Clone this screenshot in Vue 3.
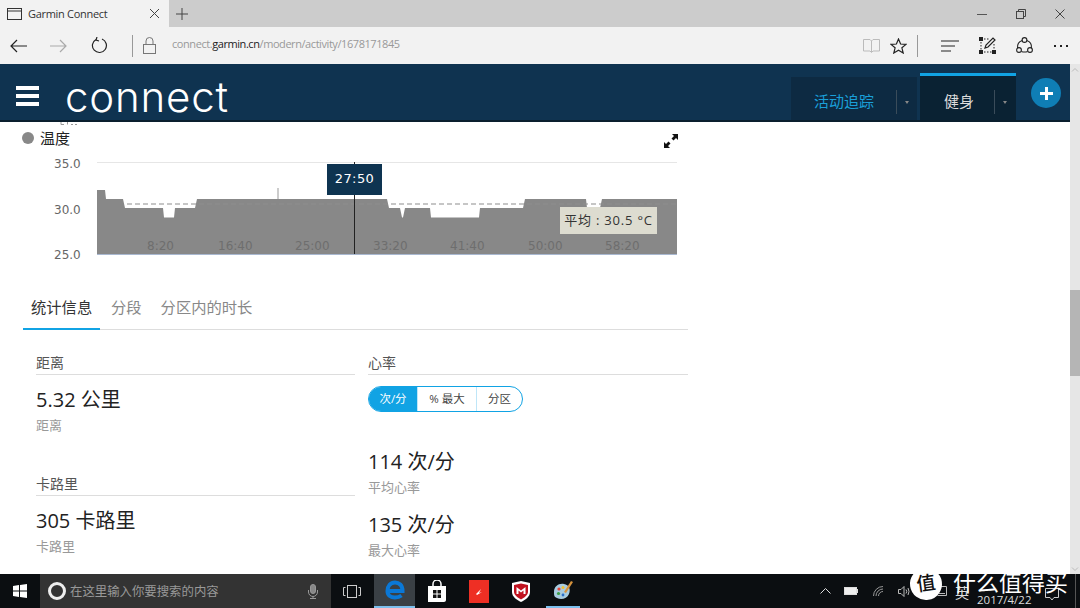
<template>
  <div class="screen">
    <!-- browser tab strip -->
    <div class="tabstrip">
      <div class="tab">
        <svg class="tab-icon" width="15" height="12" viewBox="0 0 15 12" fill="none" stroke="#333" stroke-width="1">
          <rect x="0.5" y="0.5" width="14" height="11" />
          <line x1="0.5" y1="3" x2="14.5" y2="3" />
        </svg>
        <span class="tab-title">Garmin Connect</span>
        <svg class="tab-close" width="9" height="9" viewBox="0 0 9 9" stroke="#444" stroke-width="1">
          <path d="M0 0 L9 9 M9 0 L0 9" />
        </svg>
      </div>
      <svg class="tab-new" width="12" height="12" viewBox="0 0 12 12" stroke="#444" stroke-width="1">
        <path d="M6 0 V12 M0 6 H12" />
      </svg>
      <div class="win-controls">
        <svg width="10" height="10" viewBox="0 0 10 10" stroke="#555"><path d="M0 5.5 H10" /></svg>
        <svg width="10" height="10" viewBox="0 0 10 10" stroke="#444" fill="none">
          <rect x="0.5" y="2.5" width="7" height="7" /><path d="M2.5 2.5 V0.5 H9.5 V7.5 H7.5" />
        </svg>
        <svg width="10" height="10" viewBox="0 0 10 10" stroke="#444"><path d="M0.5 0.5 L9.5 9.5 M9.5 0.5 L0.5 9.5" /></svg>
      </div>
    </div>

    <!-- address bar -->
    <div class="toolbar">
      <svg class="tb-back" width="17" height="14" viewBox="0 0 17 14" fill="none" stroke="#222" stroke-width="1.2">
        <path d="M17 7 H1 M7 1 L1 7 L7 13" />
      </svg>
      <svg class="tb-forward" width="17" height="14" viewBox="0 0 17 14" fill="none" stroke="#aaa" stroke-width="1.2">
        <path d="M0 7 H16 M10 1 L16 7 L10 13" />
      </svg>
      <svg class="tb-reload" width="17" height="17" viewBox="0 0 17 17" fill="none" stroke="#222" stroke-width="1.2">
        <path d="M5 2.4 A7 7 0 1 0 11 2 M6 0 L5 3 L8 4" />
      </svg>
      <div class="tb-sep"></div>
      <svg class="tb-lock" width="13" height="17" viewBox="0 0 13 17" fill="none" stroke="#777" stroke-width="1">
        <rect x="0.5" y="7.5" width="12" height="9" /><path d="M3 7.5 V4 A3.5 3.5 0 0 1 10 4 V7.5" />
      </svg>
      <div class="url">connect.<b>garmin.cn</b>/modern/activity/1678171845</div>
      <div class="tb-right">
        <svg width="17" height="15" viewBox="0 0 17 15" fill="none" stroke="#bbb" stroke-width="1">
          <path d="M0.5 1.5 H7 L8.5 3 L10 1.5 H16.5 V13 H10 L8.5 14.5 L7 13 H0.5 Z M8.5 3 V14" />
        </svg>
        <svg class="tb-star" width="17" height="16" viewBox="0 0 17 16" fill="none" stroke="#222" stroke-width="1.2">
          <path d="M8.5 1 L10.6 6 L16 6.4 L11.9 9.8 L13.2 15 L8.5 12.2 L3.8 15 L5.1 9.8 L1 6.4 L6.4 6 Z" />
        </svg>
        <div class="tb-sep sep-right"></div>
        <svg class="tb-hub" width="18" height="12" viewBox="0 0 18 12" stroke="#222" stroke-width="1.2">
          <path d="M0 1 H18 M0 6 H14 M0 11 H10" />
        </svg>
        <svg class="tb-note" width="17" height="17" viewBox="0 0 17 17" fill="none" stroke="#222" stroke-width="1">
          <path d="M2 2 H11 M2 15 H15 M2 2 V15 M15 7 V15" stroke-dasharray="1.5 1.5" />
          <rect x="0.5" y="0.5" width="3" height="3" fill="#222" />
          <rect x="0.5" y="13.5" width="3" height="3" fill="#222" />
          <rect x="13.5" y="13.5" width="3" height="3" fill="#222" />
          <path d="M6 11 L7 8 L14 1 L16 3 L9 10 Z" stroke-width="1.2" />
        </svg>
        <svg class="tb-share" width="17" height="17" viewBox="0 0 17 17" fill="none" stroke="#222" stroke-width="1.1">
          <circle cx="8.5" cy="3" r="2.4" /><circle cx="3" cy="13" r="2.4" /><circle cx="14" cy="13" r="2.4" />
          <path d="M6.2 3.6 A7 7 0 0 0 1.6 11 M10.8 3.6 A7 7 0 0 1 15.4 11 M5.4 14.5 Q8.5 15.6 11.6 14.5" />
        </svg>
        <div class="tb-dots"><i></i><i></i><i></i></div>
      </div>
    </div>

    <div class="viewport">
      <div class="page">
        <!-- connect nav -->
        <header class="nav">
          <div class="burger"><i></i><i></i><i></i></div>
          <div class="logo">connect</div>
          <div class="nav-tabs">
            <div class="nav-tab tracking">
              <span class="nav-label">活动追踪</span>
              <span class="nav-sep"></span>
              <span class="nav-caret"></span>
            </div>
            <div class="nav-tab fitness">
              <span class="nav-label">健身</span>
              <span class="nav-sep"></span>
              <span class="nav-caret"></span>
            </div>
          </div>
          <div class="add-btn">
            <svg width="13" height="13" viewBox="0 0 13 13" fill="#fff"><path d="M5 0 H8 V5 H13 V8 H8 V13 H5 V8 H0 V5 H5 Z" /></svg>
          </div>
        </header>

        <main class="content">
          <div class="chart-title">
            <!-- bottoms of a chart label scrolled away under the nav -->
            <svg class="cut-tick" width="17" height="3" viewBox="0 0 17 3" stroke="#999" fill="none">
              <path d="M1 0 V2.5 H4 M7.5 0 V2.5 M11 2.5 H13 M15 2.5 H17" />
            </svg>
            <span class="dot"></span>
            <span>温度</span>
            <svg class="expand" width="14" height="14" viewBox="0 0 14 14" fill="#111">
              <path d="M8 0 H14 V6 L12 4 L9.5 6.5 L7.5 4.5 L10 2 Z M0 14 V8 L2 10 L4.5 7.5 L6.5 9.5 L4 12 L6 14 Z" />
            </svg>
          </div>

          <div class="chart">
            <svg width="665" height="112" viewBox="23 155 665 112">
              <line x1="97" y1="162.5" x2="677" y2="162.5" stroke="#e6e6e6" />
              <path :d="areaPath" fill="#888" />
              <line x1="97" y1="254.5" x2="677" y2="254.5" stroke="#a9b8d0" />
              <line x1="278" y1="188" x2="278" y2="199" stroke="#999" />
              <line x1="127" y1="204" x2="677" y2="204" stroke="#8d8d8d" stroke-width="1.2" stroke-dasharray="5 3" />
              <line x1="354.5" y1="162" x2="354.5" y2="254" stroke="#222" />
              <text v-for="t in xTicks" :key="t.label" :x="t.x" y="250" class="x-tick">{{ t.label }}</text>
              <text v-for="t in yTicks" :key="t.label" x="54" :y="t.y" class="y-tick">{{ t.label }}</text>
            </svg>
            <div class="time-tip">27:50</div>
            <div class="avg-tip">平均 : 30.5 °C</div>
          </div>

          <nav class="tabs">
            <span class="tab-item active">统计信息</span>
            <span class="tab-item">分段</span>
            <span class="tab-item">分区内的时长</span>
          </nav>

          <div class="stats">
            <section class="col">
              <h3 class="col-head">距离</h3>
              <div class="value">5.32 公里</div>
              <div class="sub">距离</div>
              <h3 class="col-head calories">卡路里</h3>
              <div class="value">305 卡路里</div>
              <div class="sub">卡路里</div>
            </section>
            <section class="col">
              <h3 class="col-head">心率</h3>
              <div class="segments">
                <span class="seg on">次/分</span>
                <span class="seg wide">% 最大</span>
                <span class="seg">分区</span>
              </div>
              <div class="value hr-first">114 次/分</div>
              <div class="sub">平均心率</div>
              <div class="value hr-next">135 次/分</div>
              <div class="sub">最大心率</div>
            </section>
          </div>
        </main>
      </div>

      <div class="scrollbar">
        <svg class="arrow" width="10" height="8" viewBox="0 0 10 8" fill="none" stroke="#bbb"><path d="M2 5.5 L5 2.5 L8 5.5" /></svg>
        <div class="thumb"></div>
        <svg class="arrow down" width="10" height="8" viewBox="0 0 10 8" fill="none" stroke="#bbb"><path d="M2 2.5 L5 5.5 L8 2.5" /></svg>
      </div>
    </div>

    <!-- windows taskbar -->
    <footer class="taskbar">
      <div class="start">
        <svg width="14" height="14" viewBox="0 0 14 14" fill="#fff">
          <path d="M0 2 L6 1 V6.6 H0 Z M7 0.9 L14 0 V6.6 H7 Z M0 7.4 H6 V13 L0 12 Z M7 7.4 H14 V14 L7 13.1 Z" />
        </svg>
      </div>
      <div class="search">
        <span class="cortana"></span>
        <span class="search-text">在这里输入你要搜索的内容</span>
        <svg class="mic" width="10" height="15" viewBox="0 0 10 15" fill="none" stroke="#999" stroke-width="1">
          <rect x="2.5" y="0.5" width="5" height="9" rx="2.5" fill="#888" /><path d="M0.5 6 V8 A4.5 4.5 0 0 0 9.5 8 V6 M5 12.5 V14.5 M2 14.5 H8" />
        </svg>
      </div>
      <div class="task-icons">
        <div class="task view">
          <svg width="18" height="13" viewBox="0 0 18 13" fill="none" stroke="#ccc"><rect x="4.5" y="0.5" width="9" height="12" /><path d="M2.5 2.5 H0.5 V10.5 H2.5 M15.5 2.5 H17.5 V10.5 H15.5" /></svg>
        </div>
        <div class="task edge">
          <svg width="20" height="20" viewBox="0 0 20 20" fill="none" stroke="#0a78d7" stroke-width="4">
            <path d="M2.5 11 H17.5 C17.5 5 14 2.5 10 2.5 C5.5 2.5 2.5 6 2.5 11 C2.5 15.5 6 17.5 10 17.5 C12.5 17.5 14.5 17 16.5 15.5" />
          </svg>
        </div>
        <div class="task store">
          <svg width="20" height="22" viewBox="0 0 20 22">
            <path d="M1 6 H19 V20 C19 21 18 22 17 22 H1 Z" fill="#fff" />
            <path d="M6 6 V4 A4 4 0 0 1 14 4 V6" fill="none" stroke="#fff" stroke-width="1.5" />
            <path d="M6 10 H9.5 V13.5 H6 Z M10.5 10 H14 V13.5 H10.5 Z M6 14.5 H9.5 V18 H6 Z M10.5 14.5 H14 V18 H10.5 Z" fill="#111" />
          </svg>
        </div>
        <div class="task">
          <svg width="20" height="23" viewBox="0 0 20 23">
            <rect width="20" height="23" fill="#ee2f24" />
            <path d="M7 14 L12 9 L10 13 L13 12 L8 15 Z" fill="#fff" />
          </svg>
        </div>
        <div class="task store">
          <svg width="18" height="21" viewBox="0 0 18 21">
            <path d="M0 2 L9 0 L18 2 V11 C18 16 13 19 9 21 C5 19 0 16 0 11 Z" fill="#fff" />
            <path d="M2 4 L9 2.5 L16 4 V11 C16 14 12 17 9 18.5 C6 17 2 14 2 11 Z" fill="#c1121f" />
            <path d="M4.5 13 V6 L9 9.5 L13.5 6 V13 H11.5 V9.5 L9 11.5 L6.5 9.5 V13 Z" fill="#fff" />
          </svg>
        </div>
        <div class="task paint">
          <svg width="20" height="21" viewBox="0 0 20 21">
            <path d="M1 12 C1 6 6 3 11 4 C16 5 18 9 16 14 C14 19 8 20 4 18 C1 17 1 15 1 12 Z" fill="#a8cbe0" />
            <circle cx="6" cy="9" r="1.6" fill="#e8443a" /><circle cx="10" cy="7.5" r="1.5" fill="#f2c230" />
            <circle cx="5.5" cy="13.5" r="1.6" fill="#3a9e47" /><circle cx="10" cy="15" r="1.4" fill="#2a6fc9" />
            <path d="M11 12 L18 1 L20 2 L13 13 Z" fill="#d6923c" />
          </svg>
        </div>
      </div>
      <div class="tray">
        <svg class="chev" width="11" height="6" viewBox="0 0 11 6" fill="none" stroke="#ddd"><path d="M0.5 5.5 L5.5 0.5 L10.5 5.5" /></svg>
        <svg class="batt" width="14" height="8" viewBox="0 0 14 8"><rect x="0.5" y="0.5" width="12" height="7" fill="#eee" stroke="#ddd" /><rect x="13" y="2" width="1" height="4" fill="#ddd" /></svg>
        <svg class="wifi" width="11" height="11" viewBox="0 0 11 11" fill="none" stroke="#999"><path d="M0.5 10 A9.5 9.5 0 0 1 10 0.5 M3 10 A7 7 0 0 1 10 3 M5.5 10 A4.5 4.5 0 0 1 10 5.5" /></svg>
        <svg class="sound" width="12" height="11" viewBox="0 0 12 11" fill="none" stroke="#bbb"><path d="M0.5 3.5 H3 L6 0.5 V10.5 L3 7.5 H0.5 Z M8 3.5 Q9.5 5.5 8 7.5 M10 2 Q12 5.5 10 9" /></svg>
        <svg class="keys" width="10" height="10" viewBox="0 0 10 10" fill="none" stroke="#bbb"><path d="M0.5 0.5 H9.5 V9.5 H0.5 M2 7.5 H8" /></svg>
        <span class="ime">英</span>
        <span class="date">2017/4/22</span>
        <svg class="notice" width="14" height="13" viewBox="0 0 14 13" fill="none" stroke="#ccc"><path d="M0.5 0.5 H13.5 V9.5 H9 L7 12 L5 9.5 H0.5 Z" /></svg>
        <span class="show-desktop"></span>
      </div>
      <!-- site watermark sits over the taskbar -->
      <div class="watermark">
        <span class="wm-badge">值</span>
        <span class="wm-text">什么值得买</span>
      </div>
    </footer>
  </div>
</template>

<script setup>
import { computed } from 'vue'

const xTicks = [
  { label: '8:20', x: 147 },
  { label: '16:40', x: 218 },
  { label: '25:00', x: 295 },
  { label: '33:20', x: 373 },
  { label: '41:40', x: 450 },
  { label: '50:00', x: 528 },
  { label: '58:20', x: 605 }
]

const yTicks = [
  { label: '35.0', y: 168 },
  { label: '30.0', y: 214 },
  { label: '25.0', y: 259 }
]

// outline of the temperature area, left to right
const outline = [
  [97, 190], [105, 190], [106, 199], [123, 199], [125, 208], [163, 208], [164, 217.5], [174, 217.5],
  [175, 208], [195, 208], [197, 199], [387, 199], [389, 208], [400, 208], [402, 217.5], [403, 217.5],
  [405, 208], [430, 208], [431, 217.5], [479, 217.5], [480, 208], [523, 208], [525, 199], [586, 199],
  [587, 208], [600, 208], [602, 199], [677, 199]
]

const areaPath = computed(() => {
  const line = outline.map(p => `L ${p[0]} ${p[1]}`).join(' ')
  return `M 97 254 ${line} L 677 254 Z`
})
</script>

<style scoped>
.screen {
  width: 1080px;
  height: 608px;
  display: flex;
  flex-direction: column;
  overflow: hidden;
  background: #fff;
  font-family: "Open Sans", "Noto Sans CJK SC", sans-serif;
}

.tabstrip {
  height: 27px;
  flex: none;
  display: flex;
  align-items: center;
  background: #ccc;
}
.tab {
  width: 169px;
  height: 27px;
  display: flex;
  align-items: center;
  padding-left: 7px;
  box-sizing: border-box;
  background: #f2f2f2;
}
.tab-title {
  margin-left: 6px;
  font-size: 11px;
  letter-spacing: -0.3px;
  color: #333;
  width: 122px;
  flex: none;
}
.tab-new {
  margin-left: 7px;
}
.win-controls {
  margin-left: auto;
  display: flex;
  gap: 29px;
  padding-right: 15px;
}

.toolbar {
  height: 37px;
  flex: none;
  display: flex;
  align-items: center;
  padding-left: 10px;
  background: #f2f2f2;
}
.tb-forward {
  margin-left: 23px;
}
.tb-reload {
  margin-left: 24px;
}
.tb-sep {
  width: 1px;
  height: 22px;
  margin-left: 24px;
  background: #999;
}
.tb-lock {
  margin-left: 10px;
}
.url {
  margin: 0 0 5px 16px;
  font-size: 11px;
  letter-spacing: -0.43px;
  color: #999;
}
.url b {
  font-weight: 400;
  color: #222;
}
.tb-right {
  margin-left: auto;
  display: flex;
  align-items: center;
  padding-right: 12px;
}
.tb-star {
  margin-left: 10px;
}
.sep-right {
  margin-left: 10px;
}
.tb-hub {
  margin-left: 23px;
}
.tb-note {
  margin-left: 20px;
}
.tb-share {
  margin-left: 20px;
}
.tb-dots {
  display: flex;
  gap: 4px;
  margin-left: 21px;
}
.tb-dots i {
  width: 2px;
  height: 2px;
  background: #222;
}

.viewport {
  flex: 1;
  min-height: 0;
  display: flex;
}
.page {
  flex: 1;
  min-width: 0;
  overflow: hidden;
}
.scrollbar {
  width: 10px;
  flex: none;
  display: flex;
  flex-direction: column;
  background: #e6e6e6;
}
.arrow {
  margin-top: 2px;
}
.thumb {
  height: 86px;
  margin-top: 216px;
  background: #b5b5b5;
}
.arrow.down {
  margin-top: auto;
  margin-bottom: 1px;
}

.nav {
  height: 58px;
  display: flex;
  align-items: flex-end;
  background: #0f3350;
  border-bottom: 2px solid #0a1f2e;
  box-sizing: border-box;
}
.burger {
  align-self: flex-start;
  display: flex;
  flex-direction: column;
  gap: 4px;
  margin: 22px 0 0 16px;
}
.burger i {
  width: 23px;
  height: 4px;
  background: #fff;
}
.logo {
  align-self: flex-start;
  margin: 7px 0 0 26px;
  width: 170px;
  font-family: Inter, sans-serif;
  font-weight: 300;
  font-size: 42px;
  letter-spacing: 0.8px;
  line-height: 52px;
  color: #fff;
}
.nav-tabs {
  margin-left: auto;
  display: flex;
  align-items: flex-end;
  gap: 3px;
}
.nav-tab {
  height: 43px;
  display: flex;
  align-items: center;
  box-sizing: border-box;
  background: #0d2a42;
}
.tracking {
  width: 126px;
  padding: 3px 0 0 23px;
}
.fitness {
  width: 96px;
  height: 47px;
  padding: 4px 0 0 24px;
  background: #0a2233;
  border-top: 3px solid #11a3e4;
}
.nav-label {
  font-size: 15px;
  color: #ddd;
  width: 50px;
  flex: none;
  white-space: nowrap;
}
.tracking .nav-label {
  width: 82px;
  color: #1a9fd8;
}
.nav-sep {
  width: 1px;
  height: 24px;
  margin-top: 4px;
  background: #3a4c5a;
}
.nav-caret {
  margin: 4px 0 0 8px;
  border-left: 2px solid transparent;
  border-right: 2px solid transparent;
  border-top: 3px solid #888;
}
.add-btn {
  align-self: flex-start;
  width: 30px;
  height: 30px;
  margin: 14px 9px 0 15px;
  border-radius: 50%;
  background: #0f7eb5;
  display: flex;
  align-items: center;
  justify-content: center;
}

.content {
  padding-left: 23px;
  width: 690px;
  box-sizing: border-box;
}
.chart-title {
  height: 33px;
  padding-bottom: 2px;
  box-sizing: border-box;
  display: flex;
  align-items: center;
  font-size: 15px;
  color: #222;
  position: relative;
}
.cut-tick {
  position: absolute;
  left: 37px;
  top: 0;
}
.dot {
  width: 12px;
  height: 12px;
  margin-left: -1px;
  border-radius: 50%;
  background: #888;
  margin-right: 6px;
}
.expand {
  position: absolute;
  left: 641px;
  top: 12px;
}
.chart {
  height: 112px;
  position: relative;
}
.chart svg {
  display: block;
}
.x-tick {
  font-family: "DejaVu Sans", sans-serif;
  font-size: 12px;
  fill: #6e6e6e;
}
.y-tick {
  font-family: "DejaVu Sans", sans-serif;
  font-size: 12px;
  fill: #666;
}
.time-tip {
  position: absolute;
  left: 304px;
  top: 9px;
  width: 55px;
  height: 31px;
  background: #0e3451;
  color: #fff;
  font-family: "DejaVu Sans", sans-serif;
  font-size: 13px;
  letter-spacing: 0.4px;
  line-height: 29px;
  text-align: center;
}
.avg-tip {
  position: absolute;
  left: 537px;
  top: 52px;
  width: 97px;
  height: 27px;
  background: #dddcd0;
  color: #333;
  font-size: 13px;
  letter-spacing: 0.8px;
  line-height: 26px;
  text-align: center;
  white-space: nowrap;
}

.tabs {
  margin-top: 25px;
  width: 665px;
  height: 38px;
  display: flex;
  box-sizing: border-box;
  border-bottom: 1px solid #ddd;
}
.tab-item {
  font-size: 15.3px;
  color: #888;
  padding: 0 8px;
  margin-right: 3px;
  line-height: 30px;
  white-space: nowrap;
}
.tab-item.active {
  width: 61px;
  color: #333;
  height: 36px;
  border-bottom: 2px solid #11a3e4;
}

.stats {
  display: flex;
  padding-left: 13px;
  gap: 13px;
}
.col {
  width: 319px;
  flex: none;
}
.col:last-child {
  width: 320px;
}
.col-head {
  margin: 23px 0 0;
  height: 21px;
  font-size: 14px;
  font-weight: 400;
  line-height: 20px;
  color: #555;
  border-bottom: 1px solid #ddd;
}
.col-head.calories {
  margin-top: 40px;
}
.value {
  margin-top: 12px;
  font-size: 20px;
  line-height: 26px;
  color: #222;
}
.sub {
  margin-top: 3px;
  font-size: 13px;
  line-height: 18px;
  color: #999;
}
.segments {
  margin-top: 11px;
  width: 155px;
  height: 26px;
  display: flex;
  box-sizing: border-box;
  border: 1px solid #11a3e4;
  border-radius: 13px;
  overflow: hidden;
}
.seg {
  width: 46px;
  font-size: 11.5px;
  line-height: 24px;
  text-align: center;
  color: #444;
  border-left: 1px solid #bfe6f8;
}
.seg.wide {
  width: 59px;
}
.seg.on {
  border-left: 0;
  width: 49px;
  background: #11a3e4;
  color: #fff;
}
.hr-first {
  margin-top: 37px;
}
.hr-next {
  margin-top: 16px;
}

.taskbar {
  height: 34px;
  flex: none;
  display: flex;
  align-items: center;
  position: relative;
  background: #0b0e11;
}
.start {
  width: 40px;
  display: flex;
  justify-content: center;
}
.search {
  width: 291px;
  height: 34px;
  display: flex;
  align-items: center;
  box-sizing: border-box;
  padding-left: 8px;
  background: #333;
}
.cortana {
  width: 12px;
  height: 12px;
  border: 3px solid #eee;
  border-radius: 50%;
}
.search-text {
  margin-left: 4px;
  width: 238px;
  font-size: 12.4px;
  color: #999;
}
.task-icons {
  display: flex;
  width: 249px;
}
.task {
  width: 41px;
  height: 34px;
  flex: none;
  display: flex;
  align-items: center;
  justify-content: center;
  box-sizing: border-box;
}
.edge {
  margin-left: 2px;
  background: #3a4045;
  border-bottom: 2px solid #7cc0ee;
}
.store {
  width: 43px;
}
.paint {
  width: 34px;
  margin-left: 4px;
  border-bottom: 2px solid #7cc0ee;
}
.tray {
  flex: 1;
  display: flex;
  align-items: center;
  position: relative;
  height: 34px;
}
.tray > * {
  position: absolute;
}
.chev { left: 240px; top: 14px; }
.batt { left: 264px; top: 13px; }
.wifi { left: 293px; top: 12px; }
.sound { left: 318px; top: 12px; }
.keys { left: 357px; top: 12px; }
.ime { left: 375px; top: 8px; font-size: 14px; color: #ddd; }
.date { left: 397px; top: 18px; font-size: 11.5px; color: #ddd; }
.notice { left: 465px; top: 14px; }
.show-desktop {
  left: 495px;
  top: 0;
  width: 1px;
  height: 34px;
  background: #555;
}
.watermark {
  position: absolute;
  left: 910px;
  top: -6px;
  display: flex;
  align-items: center;
}
.wm-badge {
  width: 32px;
  height: 32px;
  border-radius: 50%;
  background: #fff;
  color: #111;
  font-size: 19px;
  font-weight: 500;
  line-height: 31px;
  text-align: center;
  transform: rotate(-8deg);
}
.wm-text {
  margin: -4px 0 0 11px;
  font-size: 23px;
  line-height: 28px;
  color: #fff;
  white-space: nowrap;
}
</style>

<style>
html, body {
  margin: 0;
  background: #fff;
}
</style>
